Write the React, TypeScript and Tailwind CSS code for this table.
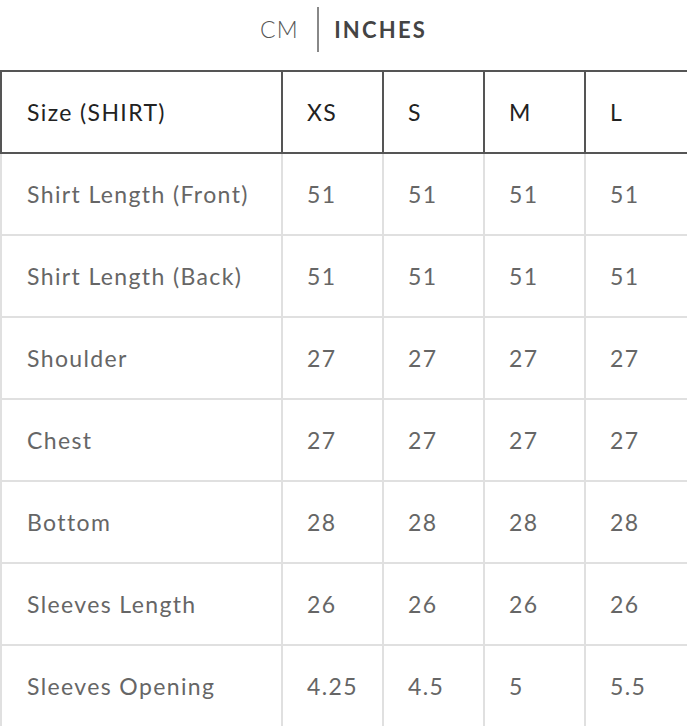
const rows: [string, string[]][] = [
  ["Shirt Length (Front)", ["51", "51", "51", "51"]],
  ["Shirt Length (Back)", ["51", "51", "51", "51"]],
  ["Shoulder", ["27", "27", "27", "27"]],
  ["Chest", ["27", "27", "27", "27"]],
  ["Bottom", ["28", "28", "28", "28"]],
  ["Sleeves Length", ["26", "26", "26", "26"]],
  ["Sleeves Opening", ["4.25", "4.5", "5", "5.5"]],
];

const sizes = ["XS", "S", "M", "L"];

export default function App() {
  return (
    <div
      className="w-[687px] h-[726px] bg-white overflow-hidden"
      style={{ fontFamily: "Lato, 'Open Sans', sans-serif" }}
    >
      {/* unit toggle */}
      <div className="h-[70px] flex items-start justify-center pt-[7px]">
        <button className="h-[45px] pr-[18px] text-[23px] leading-[45px] font-light tracking-[0.06em] text-[#555]">
          CM
        </button>
        <div className="w-[2px] h-[45px] bg-[#888]" />
        <button className="h-[45px] pl-[15px] text-[22px] leading-[45px] font-bold tracking-[0.1em] text-[#444]">
          INCHES
        </button>
      </div>

      <table className="w-[687px] border-collapse table-fixed text-[23px] tracking-[0.06em]">
        <colgroup>
          <col className="w-[281px]" />
          <col className="w-[101px]" />
          <col className="w-[101px]" />
          <col className="w-[101px]" />
          <col className="w-[103px]" />
        </colgroup>
        <thead>
          <tr className="h-[82px]">
            <th className="border-2 border-[#555] text-left font-normal pl-[25px] text-[#222]">
              Size (SHIRT)
            </th>
            {sizes.map((s) => (
              <th
                key={s}
                className="border-2 border-[#555] text-left font-normal pl-[24px] text-[#222]"
              >
                {s}
              </th>
            ))}
          </tr>
        </thead>
        <tbody>
          {rows.map(([label, vals]) => (
            <tr key={label} className="h-[82px]">
              <td className="border-2 border-[#e0e0e0] border-t-0 pl-[25px] text-[#666]">
                {label}
              </td>
              {vals.map((v, i) => (
                <td
                  key={i}
                  className="border-2 border-[#e0e0e0] border-t-0 pl-[24px] text-[#666]"
                >
                  {v}
                </td>
              ))}
            </tr>
          ))}
        </tbody>
      </table>
    </div>
  );
}
